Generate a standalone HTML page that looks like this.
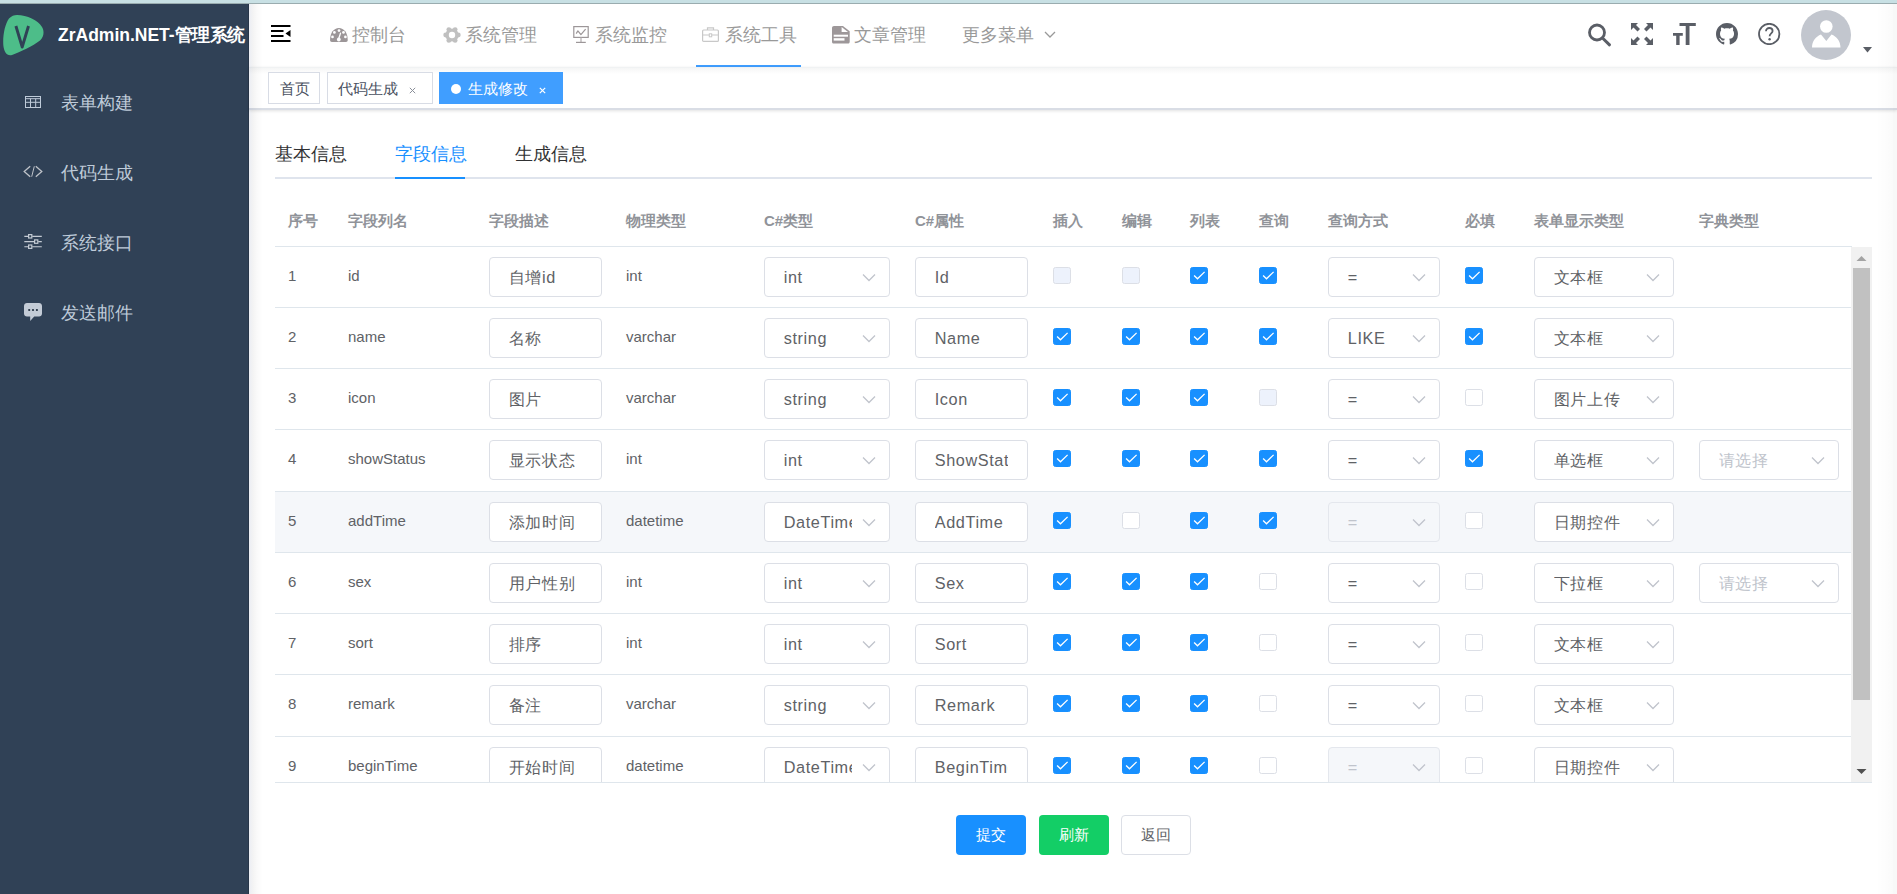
<!DOCTYPE html>
<html><head><meta charset="utf-8">
<style>
*{box-sizing:border-box;margin:0;padding:0}
html,body{width:1897px;height:894px;overflow:hidden;background:#fff;font-family:"Liberation Sans",sans-serif;}
.abs{position:absolute}
svg{display:block}
#strip{position:absolute;left:0;top:0;width:1897px;height:4px;background:#c8e0e4;border-bottom:1px solid #9aacaf}
#side{position:absolute;left:0;top:4px;width:249px;height:890px;background:#304156;border-right:1px solid #283649}
#side .title{position:absolute;left:58px;top:19px;color:#fff;font-weight:bold;font-size:17.5px;white-space:nowrap}
.mt{position:absolute;left:61px;color:#bfcbd9;font-size:17.5px;white-space:nowrap}
#nav{position:absolute;left:249px;top:4px;width:1648px;height:63px;background:#fff}
.nm{position:absolute;top:22.5px;font-size:17.5px;color:#999;white-space:nowrap}
#tags{position:absolute;left:249px;top:67px;width:1648px;height:43px;background:linear-gradient(#f5f6f6,#fff 6px);border-top:1px solid #f0f2f3;border-bottom:2px solid #d9dde5;box-shadow:0 1px 3px 0 rgba(0,0,0,.12)}
.tag{position:absolute;top:72px;height:32px;border:1px solid #d8dce5;color:#495060;background:#fff;font-size:15px;line-height:32px;white-space:nowrap}
.tab{position:absolute;top:142px;font-size:17.5px;color:#303133;white-space:nowrap}
.th{position:absolute;top:211.5px;font-size:15px;color:#909399;font-weight:bold;white-space:nowrap}
.hl{position:absolute;left:275px;width:1577px;height:1px;background:#dfe6ec}
.td{position:absolute;font-size:15px;color:#606266;white-space:nowrap}
.inp{position:absolute;height:40px;border:1px solid #dcdfe6;border-radius:4px;background:#fff;font-size:16.25px;letter-spacing:0.6px;color:#606266;line-height:38px;padding-left:18.75px;white-space:nowrap;overflow:hidden}
.sel{position:absolute;height:40px;border:1px solid #dcdfe6;border-radius:4px;background:#fff;font-size:16.25px;letter-spacing:0.6px;color:#606266;line-height:38px;padding-left:18.75px;white-space:nowrap;overflow:hidden}
.sel.dis{background:#f5f7fa;border-color:#e4e7ed;color:#c0c4cc}
.sel.ph{color:#c0c4cc}
.sel svg{position:absolute;right:13px;top:15px}
.tx{display:inline-block;overflow:hidden;vertical-align:top;white-space:nowrap}
.cb{position:absolute;width:17.5px;height:17px;border:1px solid #dcdfe6;border-radius:2.5px;background:#fff}
.cb svg{position:absolute;left:-1px;top:-1px}
.cb.on{background:#1890ff;border-color:#1890ff}
.cb.dis{background:#edf2fc;border-color:#dcdfe6}

.btn{position:absolute;top:815px;height:40px;width:70px;border-radius:4px;font-size:15px;line-height:40px;text-align:center}
</style></head><body>
<div id="strip"></div>
<div id="side">
  <svg class="abs" style="left:3px;top:11px" width="41" height="41" viewBox="0 0 41 41">
    <path d="M14 0 C24 0 35 5 39 12 C41.5 16 41 22 37 25.5 C30 31 17 37 9 40 C4 41.5 1 37 0.3 30 C-0.3 20 2 9 6 3.5 C8.5 1 11 0 14 0 Z" fill="#4dbd89"/>
    <path d="M12.9 11 L19.2 32 L25.5 11" fill="none" stroke="#304156" stroke-width="2.9" stroke-linejoin="round"/>
  </svg>
  <div class="title">ZrAdmin.NET-<span style="letter-spacing:-0.5px">管理系统</span></div>
  <!-- menu icons -->
  <svg class="abs" style="left:25px;top:92px" width="16" height="12" viewBox="0 0 16 12"><rect x="0.5" y="0.5" width="15" height="11" fill="none" stroke="#bfcbd9" stroke-width="1"/><path d="M0.5 2.7H15.5M0.5 6.3H15.5M5.5 2.7V11.5M10.7 2.7V11.5" stroke="#bfcbd9" stroke-width="1"/></svg>
  <div class="mt" style="top:87px">表单构建</div>
  <svg class="abs" style="left:23px;top:161px" width="20" height="14" viewBox="0 0 20 14"><path d="M7.2 1.2L1.2 6.5L7.2 11.8M12.8 1.2L18.8 6.5L12.8 11.8" fill="none" stroke="#bfc3c9" stroke-width="1.3"/><path d="M11.3 1.3L8.7 11.7" stroke="#bfc3c9" stroke-width="1"/></svg>
  <div class="mt" style="top:157px">代码生成</div>
  <svg class="abs" style="left:24px;top:229px" width="18" height="17" viewBox="0 0 18 17"><path d="M0.3 3.4H4.2M8.2 3.4H17.8M0.3 8.6H10.2M14.2 8.6H17.8M0.3 13.7H4.2M8.2 13.7H17.8" stroke="#c3cad3" stroke-width="1.1"/><rect x="4.6" y="1.6" width="3.2" height="3.4" fill="none" stroke="#c3cad3" stroke-width="1.2"/><rect x="10.6" y="6.9" width="3.2" height="3.4" fill="none" stroke="#c3cad3" stroke-width="1.2"/><rect x="4.6" y="12" width="3.2" height="3.4" fill="none" stroke="#c3cad3" stroke-width="1.2"/></svg>
  <div class="mt" style="top:227px">系统接口</div>
  <svg class="abs" style="left:24px;top:299px" width="18" height="19" viewBox="0 0 18 19"><path d="M3 0H15C16.7 0 18 1.3 18 3V10.5C18 12.2 16.7 13.5 15 13.5H10.2L6.2 18V13.5H3C1.3 13.5 0 12.2 0 10.5V3C0 1.3 1.3 0 3 0Z" fill="#c3cbd6"/><circle cx="5.2" cy="7" r="1.1" fill="#1f2d3d"/><circle cx="9" cy="7" r="1.1" fill="#1f2d3d"/><circle cx="12.9" cy="7" r="1.1" fill="#1f2d3d"/></svg>
  <div class="mt" style="top:297px">发送邮件</div>
</div>
<div id="nav">
  <svg class="abs" style="left:22px;top:21px" width="20" height="18" viewBox="0 0 20 18"><path d="M0 1H19.5M0 6H12.5M0 11H12.5M0 16H19.5" stroke="#000" stroke-width="2"/><path d="M19.5 5L14.5 8.5L19.5 12Z" fill="#000"/></svg>
</div>
<!-- nav menu -->
<svg class="abs" style="left:330px;top:28px" width="18" height="14" viewBox="0 0 18 14"><path d="M0.1 11.5C0.1 5 3.8 0 8.9 0C14 0 17.7 5 17.7 11.5V12.3C17.7 13.3 17 14 16 14H1.8C0.8 14 0.1 13.3 0.1 12.3Z" fill="#9c9698"/><g fill="#fff"><circle cx="9" cy="2.6" r="1.35"/><circle cx="4.4" cy="4.4" r="1.35"/><circle cx="13.5" cy="4.4" r="1.35"/><circle cx="2.5" cy="8.9" r="1.35"/><circle cx="15.4" cy="8.9" r="1.35"/><circle cx="8.8" cy="11.5" r="1.9"/></g><path d="M8.6 11L10.5 5.2" stroke="#fff" stroke-width="1.3" stroke-linecap="round"/></svg>
<div class="nm" style="left:352px">控制台</div>
<svg class="abs" style="left:442.5px;top:26px" width="18" height="18" viewBox="0 0 18 18"><mask id="gm"><rect width="18" height="18" fill="#fff"/><circle cx="9" cy="9" r="3.2" fill="#000"/></mask><g fill="#c0c0c0" mask="url(#gm)"><circle cx="9" cy="9" r="6.6"/><circle cx="15.30" cy="9.00" r="2.4"/><circle cx="12.15" cy="14.46" r="2.4"/><circle cx="5.85" cy="14.46" r="2.4"/><circle cx="2.70" cy="9.00" r="2.4"/><circle cx="5.85" cy="3.54" r="2.4"/><circle cx="12.15" cy="3.54" r="2.4"/></g></svg>
<div class="nm" style="left:465px">系统管理</div>
<svg class="abs" style="left:572px;top:26px" width="18" height="18" viewBox="0 0 18 18"><rect x="1.8" y="0.6" width="14.4" height="10.8" fill="none" stroke="#9c9698" stroke-width="1.2"/><path d="M4.2 7.6L5.9 4.9L8.9 8.6L13.6 3.2" fill="none" stroke="#9c9698" stroke-width="1.2" stroke-linejoin="round"/><path d="M9 11.4V16" stroke="#b8b3b5" stroke-width="1.3"/><path d="M4 16.4H13.8" stroke="#9c9698" stroke-width="1.2"/></svg>
<div class="nm" style="left:595px">系统监控</div>
<svg class="abs" style="left:702px;top:27px" width="17" height="15" viewBox="0 0 17 15"><rect x="0.6" y="3" width="15.8" height="11.4" rx="1" fill="none" stroke="#c8c8c8" stroke-width="1.2"/><path d="M5.5 3V0.8H11.5V3M0.6 8H16.4" fill="none" stroke="#c8c8c8" stroke-width="1.2"/><rect x="7.3" y="6.8" width="2.4" height="3" fill="#fff" stroke="#c8c8c8" stroke-width="1"/></svg>
<div class="nm" style="left:725px">系统工具</div>
<div class="abs" style="left:696px;top:65px;width:105px;height:2px;background:#409eff"></div>
<svg class="abs" style="left:832px;top:26px" width="18" height="18" viewBox="0 0 18 18"><path d="M2 0H10.9L17.7 5.3V15.7C17.7 16.9 16.9 17.6 15.7 17.6H2C0.8 17.6 0 16.9 0 15.7V2C0 0.8 0.8 0 2 0Z" fill="#9d9799"/><path d="M9.6 0.9V5.9H16Z" fill="#fff"/><rect x="1.7" y="8.7" width="14.3" height="2" fill="#fff"/><rect x="1.7" y="12.2" width="10.8" height="2.4" fill="#fff"/></svg>
<div class="nm" style="left:854px">文章管理</div>
<div class="nm" style="left:962px">更多菜单</div>
<svg class="abs" style="left:1044px;top:31px" width="12" height="8" viewBox="0 0 12 8"><path d="M1 1L6 6L11 1" fill="none" stroke="#999" stroke-width="1.3"/></svg>
<!-- right icons -->
<svg class="abs" style="left:1586px;top:22px" width="26" height="26" viewBox="0 0 26 26"><circle cx="11" cy="10.5" r="7.5" fill="none" stroke="#5a5e66" stroke-width="2.8"/><path d="M16.5 16L23.5 22.8" stroke="#5a5e66" stroke-width="3" stroke-linecap="round"/></svg>
<svg class="abs" style="left:1631px;top:23px" width="22" height="22" viewBox="0 0 22 22"><path fill="#5a5e66" d="M0 0H7L5 2L9 6L6.5 8.5L2.5 4.5L0 7Z M22 0H15L17 2L13 6L15.5 8.5L19.5 4.5L22 7Z M0 22H7L5 20L9 16L6.5 13.5L2.5 17.5L0 15Z M22 22H15L17 20L13 16L15.5 13.5L19.5 17.5L22 15Z"/></svg>
<svg class="abs" style="left:1673px;top:23px" width="24" height="22" viewBox="0 0 24 22"><path fill="#5a5e66" d="M6.5 0H22.8V2.9H16.5V22H12.7V2.9H6.5Z M0 10H9.8V12.8H6.6V22H3.2V12.8H0Z"/></svg>
<svg class="abs" style="left:1716px;top:23px" width="22" height="22" viewBox="0 0 16 16"><path fill="#5a5e66" d="M8 0C3.58 0 0 3.58 0 8c0 3.54 2.29 6.53 5.47 7.59.4.07.55-.17.55-.38 0-.19-.01-.82-.01-1.49-2.01.37-2.53-.49-2.69-.94-.09-.23-.48-.94-.82-1.13-.28-.15-.68-.52-.01-.53.63-.01 1.08.58 1.23.82.72 1.21 1.87.87 2.33.66.07-.52.28-.87.51-1.07-1.78-.2-3.64-.89-3.64-3.95 0-.87.31-1.59.82-2.15-.08-.2-.36-1.02.08-2.12 0 0 .67-.21 2.2.82.64-.18 1.32-.27 2-.27.68 0 1.36.09 2 .27 1.53-1.04 2.2-.82 2.2-.82.44 1.1.16 1.92.08 2.12.51.56.82 1.27.82 2.15 0 3.07-1.87 3.75-3.65 3.95.29.25.54.73.54 1.48 0 1.07-.01 1.93-.01 2.2 0 .21.15.46.55.38A8.013 8.013 0 0016 8c0-4.42-3.58-8-8-8z"/></svg>
<svg class="abs" style="left:1758px;top:23px" width="23" height="22" viewBox="0 0 23 22"><circle cx="11.2" cy="11" r="10.2" fill="none" stroke="#5a5e66" stroke-width="1.8"/><path d="M8 8.3C8 6.2 9.5 5 11.3 5C13.2 5 14.6 6.2 14.6 8C14.6 10.3 11.6 10.5 11.6 13.2" fill="none" stroke="#5a5e66" stroke-width="1.8"/><circle cx="11.6" cy="16.3" r="1.2" fill="#5a5e66"/></svg>
<svg class="abs" style="left:1801px;top:10px" width="50" height="50" viewBox="0 0 50 50"><circle cx="25" cy="25" r="25" fill="#c2c6ce"/><circle cx="25.3" cy="16.5" r="6.3" fill="#fff"/><path d="M11 37.5C11 31 15 26.5 20 24.5L25.3 31L30.5 24.5C35.5 26.5 39.5 31 39.5 37.5Z" fill="#fff"/></svg>
<svg class="abs" style="left:1863px;top:47px" width="10" height="6" viewBox="0 0 10 6"><path d="M0 0H9L4.5 5.5Z" fill="#5a5e66"/></svg>

<div id="tags"></div>
<div class="tag" style="left:268px;width:52px;padding-left:11px">首页</div>
<div class="tag" style="left:327px;width:106px;padding-left:10px">代码生成<svg class="abs" style="left:81px;top:14px" width="7" height="7" viewBox="0 0 7 7"><path d="M0.8 0.8L6.2 6.2M6.2 0.8L0.8 6.2" stroke="#8a8f99" stroke-width="1"/></svg></div>
<div class="tag" style="left:439px;width:124px;background:#42a5f5;border-color:#42a5f5;color:#fff;padding-left:28px;background:#409eff;border-color:#409eff">生成修改<span style="position:absolute;left:11px;top:11px;width:10px;height:10px;border-radius:5px;background:#fff"></span><svg class="abs" style="left:99px;top:14px" width="7" height="7" viewBox="0 0 7 7"><path d="M0.8 0.8L6.2 6.2M6.2 0.8L0.8 6.2" stroke="#fff" stroke-width="1.2"/></svg></div>

<div class="tab" style="left:275px">基本信息</div>
<div class="tab" style="left:395px;color:#1890ff">字段信息</div>
<div class="tab" style="left:515px">生成信息</div>
<div class="abs" style="left:275px;top:177px;width:1597px;height:2px;background:#dfe4ed"></div>
<div class="abs" style="left:395px;top:177px;width:70px;height:2px;background:#1890ff"></div>

<div class="th" style="left:288px">序号</div>
<div class="th" style="left:348px">字段列名</div>
<div class="th" style="left:489px">字段描述</div>
<div class="th" style="left:626px">物理类型</div>
<div class="th" style="left:764px">C#类型</div>
<div class="th" style="left:915px">C#属性</div>
<div class="th" style="left:1053px">插入</div>
<div class="th" style="left:1122px">编辑</div>
<div class="th" style="left:1190px">列表</div>
<div class="th" style="left:1259px">查询</div>
<div class="th" style="left:1328px">查询方式</div>
<div class="th" style="left:1465px">必填</div>
<div class="th" style="left:1534px">表单显示类型</div>
<div class="th" style="left:1699px">字典类型</div>
<div class="abs" style="left:0;top:0;width:1897px;height:782px;overflow:hidden">
<div class="hl" style="top:246px"></div>
<div class="td" style="left:288px;top:267px">1</div>
<div class="td" style="left:348px;top:267px">id</div>
<div class="inp" style="left:489px;top:257.25px;width:113px"><span class="tx" style="width:73.5px">自增id</span></div>
<div class="td" style="left:626px;top:267px">int</div>
<div class="sel " style="left:764px;top:257.25px;width:126px"><span class="tx" style="width:67.75px">int</span><svg width="14" height="9" viewBox="0 0 14 9"><path d="M1 1.5 L7 7.5 L13 1.5" fill="none" stroke="#c0c4cc" stroke-width="1.3"/></svg></div>
<div class="inp" style="left:915px;top:257.25px;width:113px"><span class="tx" style="width:73.5px">Id</span></div>
<div class="cb dis" style="left:1053px;top:266.75px"></div>
<div class="cb dis" style="left:1122px;top:266.75px"></div>
<div class="cb on" style="left:1190px;top:266.75px"><svg width="18" height="17" viewBox="0 0 18 17"><path d="M4.1 8.5L7.5 11.8L14.6 4.9" fill="none" stroke="#fff" stroke-width="1.3"/></svg></div>
<div class="cb on" style="left:1259px;top:266.75px"><svg width="18" height="17" viewBox="0 0 18 17"><path d="M4.1 8.5L7.5 11.8L14.6 4.9" fill="none" stroke="#fff" stroke-width="1.3"/></svg></div>
<div class="sel " style="left:1328px;top:257.25px;width:112px"><span class="tx" style="width:53.75px">=</span><svg width="14" height="9" viewBox="0 0 14 9"><path d="M1 1.5 L7 7.5 L13 1.5" fill="none" stroke="#c0c4cc" stroke-width="1.3"/></svg></div>
<div class="cb on" style="left:1465px;top:266.75px"><svg width="18" height="17" viewBox="0 0 18 17"><path d="M4.1 8.5L7.5 11.8L14.6 4.9" fill="none" stroke="#fff" stroke-width="1.3"/></svg></div>
<div class="sel " style="left:1534px;top:257.25px;width:140px"><span class="tx" style="width:81.75px">文本框</span><svg width="14" height="9" viewBox="0 0 14 9"><path d="M1 1.5 L7 7.5 L13 1.5" fill="none" stroke="#c0c4cc" stroke-width="1.3"/></svg></div>
<div class="hl" style="top:307px"></div>
<div class="td" style="left:288px;top:328px">2</div>
<div class="td" style="left:348px;top:328px">name</div>
<div class="inp" style="left:489px;top:318.25px;width:113px"><span class="tx" style="width:73.5px">名称</span></div>
<div class="td" style="left:626px;top:328px">varchar</div>
<div class="sel " style="left:764px;top:318.25px;width:126px"><span class="tx" style="width:67.75px">string</span><svg width="14" height="9" viewBox="0 0 14 9"><path d="M1 1.5 L7 7.5 L13 1.5" fill="none" stroke="#c0c4cc" stroke-width="1.3"/></svg></div>
<div class="inp" style="left:915px;top:318.25px;width:113px"><span class="tx" style="width:73.5px">Name</span></div>
<div class="cb on" style="left:1053px;top:327.75px"><svg width="18" height="17" viewBox="0 0 18 17"><path d="M4.1 8.5L7.5 11.8L14.6 4.9" fill="none" stroke="#fff" stroke-width="1.3"/></svg></div>
<div class="cb on" style="left:1122px;top:327.75px"><svg width="18" height="17" viewBox="0 0 18 17"><path d="M4.1 8.5L7.5 11.8L14.6 4.9" fill="none" stroke="#fff" stroke-width="1.3"/></svg></div>
<div class="cb on" style="left:1190px;top:327.75px"><svg width="18" height="17" viewBox="0 0 18 17"><path d="M4.1 8.5L7.5 11.8L14.6 4.9" fill="none" stroke="#fff" stroke-width="1.3"/></svg></div>
<div class="cb on" style="left:1259px;top:327.75px"><svg width="18" height="17" viewBox="0 0 18 17"><path d="M4.1 8.5L7.5 11.8L14.6 4.9" fill="none" stroke="#fff" stroke-width="1.3"/></svg></div>
<div class="sel " style="left:1328px;top:318.25px;width:112px"><span class="tx" style="width:53.75px">LIKE</span><svg width="14" height="9" viewBox="0 0 14 9"><path d="M1 1.5 L7 7.5 L13 1.5" fill="none" stroke="#c0c4cc" stroke-width="1.3"/></svg></div>
<div class="cb on" style="left:1465px;top:327.75px"><svg width="18" height="17" viewBox="0 0 18 17"><path d="M4.1 8.5L7.5 11.8L14.6 4.9" fill="none" stroke="#fff" stroke-width="1.3"/></svg></div>
<div class="sel " style="left:1534px;top:318.25px;width:140px"><span class="tx" style="width:81.75px">文本框</span><svg width="14" height="9" viewBox="0 0 14 9"><path d="M1 1.5 L7 7.5 L13 1.5" fill="none" stroke="#c0c4cc" stroke-width="1.3"/></svg></div>
<div class="hl" style="top:368px"></div>
<div class="td" style="left:288px;top:389px">3</div>
<div class="td" style="left:348px;top:389px">icon</div>
<div class="inp" style="left:489px;top:379.25px;width:113px"><span class="tx" style="width:73.5px">图片</span></div>
<div class="td" style="left:626px;top:389px">varchar</div>
<div class="sel " style="left:764px;top:379.25px;width:126px"><span class="tx" style="width:67.75px">string</span><svg width="14" height="9" viewBox="0 0 14 9"><path d="M1 1.5 L7 7.5 L13 1.5" fill="none" stroke="#c0c4cc" stroke-width="1.3"/></svg></div>
<div class="inp" style="left:915px;top:379.25px;width:113px"><span class="tx" style="width:73.5px">Icon</span></div>
<div class="cb on" style="left:1053px;top:388.75px"><svg width="18" height="17" viewBox="0 0 18 17"><path d="M4.1 8.5L7.5 11.8L14.6 4.9" fill="none" stroke="#fff" stroke-width="1.3"/></svg></div>
<div class="cb on" style="left:1122px;top:388.75px"><svg width="18" height="17" viewBox="0 0 18 17"><path d="M4.1 8.5L7.5 11.8L14.6 4.9" fill="none" stroke="#fff" stroke-width="1.3"/></svg></div>
<div class="cb on" style="left:1190px;top:388.75px"><svg width="18" height="17" viewBox="0 0 18 17"><path d="M4.1 8.5L7.5 11.8L14.6 4.9" fill="none" stroke="#fff" stroke-width="1.3"/></svg></div>
<div class="cb dis" style="left:1259px;top:388.75px"></div>
<div class="sel " style="left:1328px;top:379.25px;width:112px"><span class="tx" style="width:53.75px">=</span><svg width="14" height="9" viewBox="0 0 14 9"><path d="M1 1.5 L7 7.5 L13 1.5" fill="none" stroke="#c0c4cc" stroke-width="1.3"/></svg></div>
<div class="cb" style="left:1465px;top:388.75px"></div>
<div class="sel " style="left:1534px;top:379.25px;width:140px"><span class="tx" style="width:81.75px">图片上传</span><svg width="14" height="9" viewBox="0 0 14 9"><path d="M1 1.5 L7 7.5 L13 1.5" fill="none" stroke="#c0c4cc" stroke-width="1.3"/></svg></div>
<div class="hl" style="top:429px"></div>
<div class="td" style="left:288px;top:450px">4</div>
<div class="td" style="left:348px;top:450px">showStatus</div>
<div class="inp" style="left:489px;top:440.25px;width:113px"><span class="tx" style="width:73.5px">显示状态</span></div>
<div class="td" style="left:626px;top:450px">int</div>
<div class="sel " style="left:764px;top:440.25px;width:126px"><span class="tx" style="width:67.75px">int</span><svg width="14" height="9" viewBox="0 0 14 9"><path d="M1 1.5 L7 7.5 L13 1.5" fill="none" stroke="#c0c4cc" stroke-width="1.3"/></svg></div>
<div class="inp" style="left:915px;top:440.25px;width:113px"><span class="tx" style="width:73.5px">ShowStatus</span></div>
<div class="cb on" style="left:1053px;top:449.75px"><svg width="18" height="17" viewBox="0 0 18 17"><path d="M4.1 8.5L7.5 11.8L14.6 4.9" fill="none" stroke="#fff" stroke-width="1.3"/></svg></div>
<div class="cb on" style="left:1122px;top:449.75px"><svg width="18" height="17" viewBox="0 0 18 17"><path d="M4.1 8.5L7.5 11.8L14.6 4.9" fill="none" stroke="#fff" stroke-width="1.3"/></svg></div>
<div class="cb on" style="left:1190px;top:449.75px"><svg width="18" height="17" viewBox="0 0 18 17"><path d="M4.1 8.5L7.5 11.8L14.6 4.9" fill="none" stroke="#fff" stroke-width="1.3"/></svg></div>
<div class="cb on" style="left:1259px;top:449.75px"><svg width="18" height="17" viewBox="0 0 18 17"><path d="M4.1 8.5L7.5 11.8L14.6 4.9" fill="none" stroke="#fff" stroke-width="1.3"/></svg></div>
<div class="sel " style="left:1328px;top:440.25px;width:112px"><span class="tx" style="width:53.75px">=</span><svg width="14" height="9" viewBox="0 0 14 9"><path d="M1 1.5 L7 7.5 L13 1.5" fill="none" stroke="#c0c4cc" stroke-width="1.3"/></svg></div>
<div class="cb on" style="left:1465px;top:449.75px"><svg width="18" height="17" viewBox="0 0 18 17"><path d="M4.1 8.5L7.5 11.8L14.6 4.9" fill="none" stroke="#fff" stroke-width="1.3"/></svg></div>
<div class="sel " style="left:1534px;top:440.25px;width:140px"><span class="tx" style="width:81.75px">单选框</span><svg width="14" height="9" viewBox="0 0 14 9"><path d="M1 1.5 L7 7.5 L13 1.5" fill="none" stroke="#c0c4cc" stroke-width="1.3"/></svg></div>
<div class="sel ph" style="left:1699px;top:440.25px;width:140px"><span class="tx" style="width:81.75px">请选择</span><svg width="14" height="9" viewBox="0 0 14 9"><path d="M1 1.5 L7 7.5 L13 1.5" fill="none" stroke="#c0c4cc" stroke-width="1.3"/></svg></div>
<div class="abs" style="left:275px;top:492px;width:1577px;height:60px;background:#f5f7fa"></div>
<div class="hl" style="top:491px"></div>
<div class="td" style="left:288px;top:512px">5</div>
<div class="td" style="left:348px;top:512px">addTime</div>
<div class="inp" style="left:489px;top:502.25px;width:113px"><span class="tx" style="width:73.5px">添加时间</span></div>
<div class="td" style="left:626px;top:512px">datetime</div>
<div class="sel " style="left:764px;top:502.25px;width:126px"><span class="tx" style="width:67.75px">DateTime</span><svg width="14" height="9" viewBox="0 0 14 9"><path d="M1 1.5 L7 7.5 L13 1.5" fill="none" stroke="#c0c4cc" stroke-width="1.3"/></svg></div>
<div class="inp" style="left:915px;top:502.25px;width:113px"><span class="tx" style="width:73.5px">AddTime</span></div>
<div class="cb on" style="left:1053px;top:511.75px"><svg width="18" height="17" viewBox="0 0 18 17"><path d="M4.1 8.5L7.5 11.8L14.6 4.9" fill="none" stroke="#fff" stroke-width="1.3"/></svg></div>
<div class="cb" style="left:1122px;top:511.75px"></div>
<div class="cb on" style="left:1190px;top:511.75px"><svg width="18" height="17" viewBox="0 0 18 17"><path d="M4.1 8.5L7.5 11.8L14.6 4.9" fill="none" stroke="#fff" stroke-width="1.3"/></svg></div>
<div class="cb on" style="left:1259px;top:511.75px"><svg width="18" height="17" viewBox="0 0 18 17"><path d="M4.1 8.5L7.5 11.8L14.6 4.9" fill="none" stroke="#fff" stroke-width="1.3"/></svg></div>
<div class="sel dis" style="left:1328px;top:502.25px;width:112px"><span class="tx" style="width:53.75px">=</span><svg width="14" height="9" viewBox="0 0 14 9"><path d="M1 1.5 L7 7.5 L13 1.5" fill="none" stroke="#c0c4cc" stroke-width="1.3"/></svg></div>
<div class="cb" style="left:1465px;top:511.75px"></div>
<div class="sel " style="left:1534px;top:502.25px;width:140px"><span class="tx" style="width:81.75px">日期控件</span><svg width="14" height="9" viewBox="0 0 14 9"><path d="M1 1.5 L7 7.5 L13 1.5" fill="none" stroke="#c0c4cc" stroke-width="1.3"/></svg></div>
<div class="hl" style="top:552px"></div>
<div class="td" style="left:288px;top:573px">6</div>
<div class="td" style="left:348px;top:573px">sex</div>
<div class="inp" style="left:489px;top:563.25px;width:113px"><span class="tx" style="width:73.5px">用户性别</span></div>
<div class="td" style="left:626px;top:573px">int</div>
<div class="sel " style="left:764px;top:563.25px;width:126px"><span class="tx" style="width:67.75px">int</span><svg width="14" height="9" viewBox="0 0 14 9"><path d="M1 1.5 L7 7.5 L13 1.5" fill="none" stroke="#c0c4cc" stroke-width="1.3"/></svg></div>
<div class="inp" style="left:915px;top:563.25px;width:113px"><span class="tx" style="width:73.5px">Sex</span></div>
<div class="cb on" style="left:1053px;top:572.75px"><svg width="18" height="17" viewBox="0 0 18 17"><path d="M4.1 8.5L7.5 11.8L14.6 4.9" fill="none" stroke="#fff" stroke-width="1.3"/></svg></div>
<div class="cb on" style="left:1122px;top:572.75px"><svg width="18" height="17" viewBox="0 0 18 17"><path d="M4.1 8.5L7.5 11.8L14.6 4.9" fill="none" stroke="#fff" stroke-width="1.3"/></svg></div>
<div class="cb on" style="left:1190px;top:572.75px"><svg width="18" height="17" viewBox="0 0 18 17"><path d="M4.1 8.5L7.5 11.8L14.6 4.9" fill="none" stroke="#fff" stroke-width="1.3"/></svg></div>
<div class="cb" style="left:1259px;top:572.75px"></div>
<div class="sel " style="left:1328px;top:563.25px;width:112px"><span class="tx" style="width:53.75px">=</span><svg width="14" height="9" viewBox="0 0 14 9"><path d="M1 1.5 L7 7.5 L13 1.5" fill="none" stroke="#c0c4cc" stroke-width="1.3"/></svg></div>
<div class="cb" style="left:1465px;top:572.75px"></div>
<div class="sel " style="left:1534px;top:563.25px;width:140px"><span class="tx" style="width:81.75px">下拉框</span><svg width="14" height="9" viewBox="0 0 14 9"><path d="M1 1.5 L7 7.5 L13 1.5" fill="none" stroke="#c0c4cc" stroke-width="1.3"/></svg></div>
<div class="sel ph" style="left:1699px;top:563.25px;width:140px"><span class="tx" style="width:81.75px">请选择</span><svg width="14" height="9" viewBox="0 0 14 9"><path d="M1 1.5 L7 7.5 L13 1.5" fill="none" stroke="#c0c4cc" stroke-width="1.3"/></svg></div>
<div class="hl" style="top:613px"></div>
<div class="td" style="left:288px;top:634px">7</div>
<div class="td" style="left:348px;top:634px">sort</div>
<div class="inp" style="left:489px;top:624.25px;width:113px"><span class="tx" style="width:73.5px">排序</span></div>
<div class="td" style="left:626px;top:634px">int</div>
<div class="sel " style="left:764px;top:624.25px;width:126px"><span class="tx" style="width:67.75px">int</span><svg width="14" height="9" viewBox="0 0 14 9"><path d="M1 1.5 L7 7.5 L13 1.5" fill="none" stroke="#c0c4cc" stroke-width="1.3"/></svg></div>
<div class="inp" style="left:915px;top:624.25px;width:113px"><span class="tx" style="width:73.5px">Sort</span></div>
<div class="cb on" style="left:1053px;top:633.75px"><svg width="18" height="17" viewBox="0 0 18 17"><path d="M4.1 8.5L7.5 11.8L14.6 4.9" fill="none" stroke="#fff" stroke-width="1.3"/></svg></div>
<div class="cb on" style="left:1122px;top:633.75px"><svg width="18" height="17" viewBox="0 0 18 17"><path d="M4.1 8.5L7.5 11.8L14.6 4.9" fill="none" stroke="#fff" stroke-width="1.3"/></svg></div>
<div class="cb on" style="left:1190px;top:633.75px"><svg width="18" height="17" viewBox="0 0 18 17"><path d="M4.1 8.5L7.5 11.8L14.6 4.9" fill="none" stroke="#fff" stroke-width="1.3"/></svg></div>
<div class="cb" style="left:1259px;top:633.75px"></div>
<div class="sel " style="left:1328px;top:624.25px;width:112px"><span class="tx" style="width:53.75px">=</span><svg width="14" height="9" viewBox="0 0 14 9"><path d="M1 1.5 L7 7.5 L13 1.5" fill="none" stroke="#c0c4cc" stroke-width="1.3"/></svg></div>
<div class="cb" style="left:1465px;top:633.75px"></div>
<div class="sel " style="left:1534px;top:624.25px;width:140px"><span class="tx" style="width:81.75px">文本框</span><svg width="14" height="9" viewBox="0 0 14 9"><path d="M1 1.5 L7 7.5 L13 1.5" fill="none" stroke="#c0c4cc" stroke-width="1.3"/></svg></div>
<div class="hl" style="top:674px"></div>
<div class="td" style="left:288px;top:695px">8</div>
<div class="td" style="left:348px;top:695px">remark</div>
<div class="inp" style="left:489px;top:685.25px;width:113px"><span class="tx" style="width:73.5px">备注</span></div>
<div class="td" style="left:626px;top:695px">varchar</div>
<div class="sel " style="left:764px;top:685.25px;width:126px"><span class="tx" style="width:67.75px">string</span><svg width="14" height="9" viewBox="0 0 14 9"><path d="M1 1.5 L7 7.5 L13 1.5" fill="none" stroke="#c0c4cc" stroke-width="1.3"/></svg></div>
<div class="inp" style="left:915px;top:685.25px;width:113px"><span class="tx" style="width:73.5px">Remark</span></div>
<div class="cb on" style="left:1053px;top:694.75px"><svg width="18" height="17" viewBox="0 0 18 17"><path d="M4.1 8.5L7.5 11.8L14.6 4.9" fill="none" stroke="#fff" stroke-width="1.3"/></svg></div>
<div class="cb on" style="left:1122px;top:694.75px"><svg width="18" height="17" viewBox="0 0 18 17"><path d="M4.1 8.5L7.5 11.8L14.6 4.9" fill="none" stroke="#fff" stroke-width="1.3"/></svg></div>
<div class="cb on" style="left:1190px;top:694.75px"><svg width="18" height="17" viewBox="0 0 18 17"><path d="M4.1 8.5L7.5 11.8L14.6 4.9" fill="none" stroke="#fff" stroke-width="1.3"/></svg></div>
<div class="cb" style="left:1259px;top:694.75px"></div>
<div class="sel " style="left:1328px;top:685.25px;width:112px"><span class="tx" style="width:53.75px">=</span><svg width="14" height="9" viewBox="0 0 14 9"><path d="M1 1.5 L7 7.5 L13 1.5" fill="none" stroke="#c0c4cc" stroke-width="1.3"/></svg></div>
<div class="cb" style="left:1465px;top:694.75px"></div>
<div class="sel " style="left:1534px;top:685.25px;width:140px"><span class="tx" style="width:81.75px">文本框</span><svg width="14" height="9" viewBox="0 0 14 9"><path d="M1 1.5 L7 7.5 L13 1.5" fill="none" stroke="#c0c4cc" stroke-width="1.3"/></svg></div>
<div class="hl" style="top:736px"></div>
<div class="td" style="left:288px;top:757px">9</div>
<div class="td" style="left:348px;top:757px">beginTime</div>
<div class="inp" style="left:489px;top:747.25px;width:113px"><span class="tx" style="width:73.5px">开始时间</span></div>
<div class="td" style="left:626px;top:757px">datetime</div>
<div class="sel " style="left:764px;top:747.25px;width:126px"><span class="tx" style="width:67.75px">DateTime</span><svg width="14" height="9" viewBox="0 0 14 9"><path d="M1 1.5 L7 7.5 L13 1.5" fill="none" stroke="#c0c4cc" stroke-width="1.3"/></svg></div>
<div class="inp" style="left:915px;top:747.25px;width:113px"><span class="tx" style="width:73.5px">BeginTime</span></div>
<div class="cb on" style="left:1053px;top:756.75px"><svg width="18" height="17" viewBox="0 0 18 17"><path d="M4.1 8.5L7.5 11.8L14.6 4.9" fill="none" stroke="#fff" stroke-width="1.3"/></svg></div>
<div class="cb on" style="left:1122px;top:756.75px"><svg width="18" height="17" viewBox="0 0 18 17"><path d="M4.1 8.5L7.5 11.8L14.6 4.9" fill="none" stroke="#fff" stroke-width="1.3"/></svg></div>
<div class="cb on" style="left:1190px;top:756.75px"><svg width="18" height="17" viewBox="0 0 18 17"><path d="M4.1 8.5L7.5 11.8L14.6 4.9" fill="none" stroke="#fff" stroke-width="1.3"/></svg></div>
<div class="cb" style="left:1259px;top:756.75px"></div>
<div class="sel dis" style="left:1328px;top:747.25px;width:112px"><span class="tx" style="width:53.75px">=</span><svg width="14" height="9" viewBox="0 0 14 9"><path d="M1 1.5 L7 7.5 L13 1.5" fill="none" stroke="#c0c4cc" stroke-width="1.3"/></svg></div>
<div class="cb" style="left:1465px;top:756.75px"></div>
<div class="sel " style="left:1534px;top:747.25px;width:140px"><span class="tx" style="width:81.75px">日期控件</span><svg width="14" height="9" viewBox="0 0 14 9"><path d="M1 1.5 L7 7.5 L13 1.5" fill="none" stroke="#c0c4cc" stroke-width="1.3"/></svg></div>
</div>
<div class="hl" style="top:782px;width:1597px"></div>

<!-- scrollbar -->
<div class="abs" style="left:1851px;top:247px;width:21px;height:535px;background:#f1f1f1"></div>
<div class="abs" style="left:1853px;top:268px;width:17px;height:432px;background:#c1c1c1"></div>
<svg class="abs" style="left:1856px;top:255px" width="11" height="7" viewBox="0 0 11 7"><path d="M0.5 6L5.5 1L10.5 6Z" fill="#a3a3a3"/></svg>
<svg class="abs" style="left:1856px;top:768px" width="11" height="7" viewBox="0 0 11 7"><path d="M0.5 1L5.5 6L10.5 1Z" fill="#505050"/></svg>

<div class="btn" style="left:956px;background:#1890ff;color:#fff;line-height:39px">提交</div>
<div class="btn" style="left:1039px;background:#13ce66;color:#fff;line-height:39px">刷新</div>
<div class="btn" style="left:1121px;border:1px solid #dcdfe6;color:#606266;line-height:37px">返回</div>
<div class="abs" style="left:249px;top:4px;width:14px;height:890px;background:linear-gradient(to right,rgba(30,60,130,.09),rgba(0,0,0,.045) 30%,rgba(0,0,0,.02) 60%,rgba(0,0,0,0))"></div>
<div class="abs" style="left:1876px;top:4px;width:17px;height:890px;background:linear-gradient(to right,rgba(0,0,0,0),rgba(0,0,0,.02))"></div>
<div class="abs" style="left:1893px;top:4px;width:4px;height:890px;background:rgba(0,0,0,.028)"></div>
</body></html>
